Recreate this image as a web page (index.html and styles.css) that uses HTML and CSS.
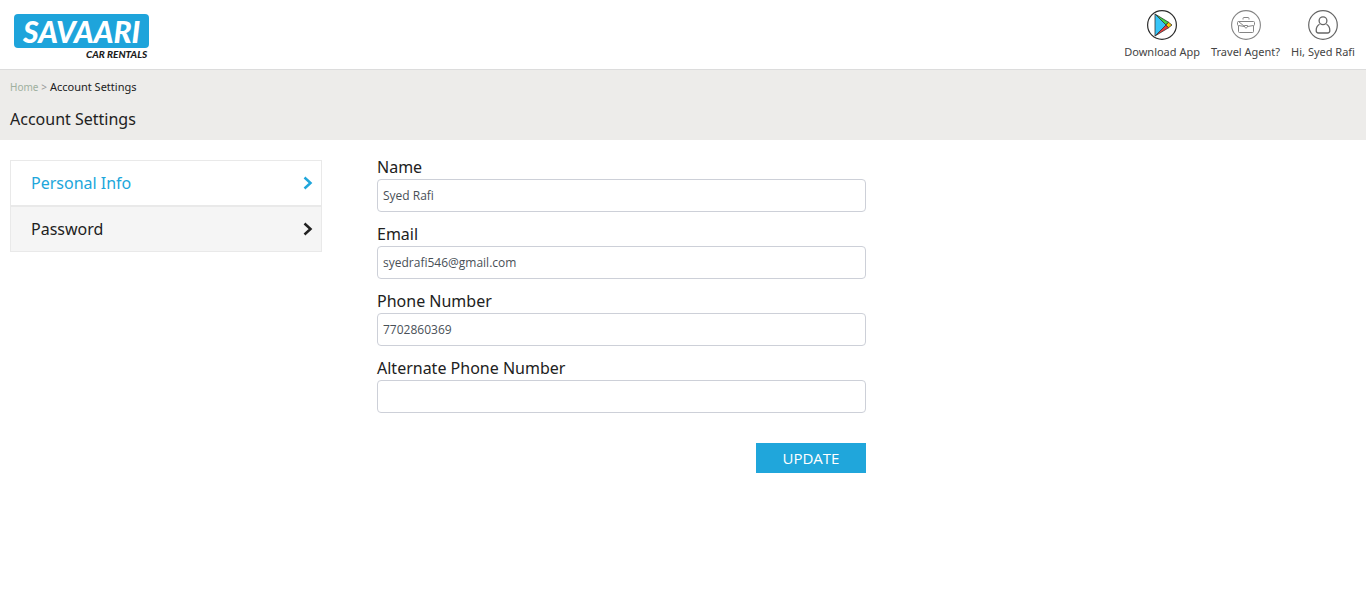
FILE: index.html
```html
<!DOCTYPE html>
<html lang="en">
<head>
<meta charset="utf-8">
<meta name="viewport" content="width=device-width, initial-scale=1">
<title>Account Settings - Savaari Car Rentals</title>
<link rel="stylesheet" href="styles.css">
</head>
<body>
<header class="site-header">
  <a class="logo" href="#">
    <span class="logo-name">SAVAARI</span>
    <span class="logo-tag">CAR RENTALS</span>
  </a>
  <nav class="top-nav" aria-label="Account">
    <a class="top-link" href="#">
      <svg class="top-icon" viewBox="0 0 30 30" aria-hidden="true">
        <circle cx="15" cy="15" r="14.4" fill="#fff" stroke="#2d2d2d" stroke-width="1.2"/>
        <g stroke="#333" stroke-width=".8" stroke-linejoin="round">
          <path d="M8 4 22 12.500 18 15Z" fill="#43d843"/>
          <path d="M8 26 22 17.500 18 15Z" fill="#e93c3c"/>
          <path d="M8 4V26L19 15Z" fill="#36c5f8"/>
          <path d="M19 15 21.500 12.300 25 15 21.500 17.700Z" fill="#ffc800"/>
        </g>
      </svg>
      <span>Download App</span>
    </a>
    <a class="top-link" href="#">
      <svg class="top-icon" viewBox="0 0 30 30" fill="none" stroke="#858585" aria-hidden="true">
        <circle cx="15" cy="15" r="14.400" stroke-width="1.100"/>
        <path d="M12 9.500V8.500Q12 7.500 13 7.500H17Q18 7.500 18 8.500V9.500"/>
        <path d="M7.500 11.500H22.500Q23.500 11.500 23.500 12.500V14.500Q23.500 15.500 22.500 15.500L16.500 16.500M13.500 16.500 7.500 15.500Q6.500 15.500 6.500 14.500V12.500Q6.500 11.500 7.500 11.500Z"/>
        <path d="M7.500 16V21.500Q7.500 22.500 8.500 22.500H21.500Q22.500 22.500 22.500 21.500V16M13.500 15.500H16.500V17L15 18.200 13.500 17Z"/>
      </svg>
      <span>Travel Agent?</span>
    </a>
    <a class="top-link" href="#">
      <svg class="top-icon" viewBox="0 0 30 30" fill="none" stroke="#666" stroke-width="1.300" aria-hidden="true">
        <circle cx="15" cy="15" r="14.300" stroke-width="1.200"/>
        <circle cx="15" cy="10.700" r="3.900"/>
        <path d="M11.500 14.200C9 15.600 8.200 17.800 8.200 20.500Q8.200 23 10.500 23H19.500Q21.800 23 21.800 20.500C21.800 17.800 21 15.600 18.500 14.200"/>
      </svg>
      <span>Hi, Syed Rafi</span>
    </a>
  </nav>
</header>

<section class="page-head">
  <nav class="crumbs" aria-label="Breadcrumb"><a class="crumb-home" href="#">Home</a> <span class="crumb-sep">&gt;</span> <span>Account Settings</span></nav>
  <h1 class="page-title">Account Settings</h1>
</section>

<main class="content">
  <nav class="side-nav" aria-label="Settings">
    <a class="side-link side-link-active" href="#" aria-current="page">
      <span>Personal Info</span>
      <svg class="chevron" viewBox="0 0 10 14" aria-hidden="true"><path d="M1.500 1.500 7.500 7 1.500 12.500"/></svg>
    </a>
    <a class="side-link" href="#">
      <span>Password</span>
      <svg class="chevron" viewBox="0 0 10 14" aria-hidden="true"><path d="M1.500 1.500 7.500 7 1.500 12.500"/></svg>
    </a>
  </nav>
  <form class="info-form">
    <div class="field">
      <label for="name">Name</label>
      <input id="name" type="text" value="Syed Rafi">
    </div>
    <div class="field">
      <label for="email">Email</label>
      <input id="email" type="email" value="syedrafi546@gmail.com">
    </div>
    <div class="field">
      <label for="phone">Phone Number</label>
      <input id="phone" type="tel" value="7702860369">
    </div>
    <div class="field">
      <label for="alt-phone">Alternate Phone Number</label>
      <input id="alt-phone" type="tel">
    </div>
    <button class="update" type="button">UPDATE</button>
  </form>
</main>
</body>
</html>
```
FILE: styles.css
```css
* {
  box-sizing: border-box;
}

body {
  margin: 0;
  background: #fff;
  color: #212121;
  font-family: "Noto Sans", "Open Sans", sans-serif;
  font-size: 16px;
}

a {
  color: inherit;
  text-decoration: none;
}

.site-header {
  display: flex;
  justify-content: space-between;
  align-items: flex-start;
  padding: 10px 10px 8px 14px;
  border-bottom: 1px solid #dcdcdc;
}

.logo {
  display: flex;
  flex-direction: column;
  padding-top: 4px;
  font-family: Lato, sans-serif;
  font-style: italic;
  font-weight: 900;
}

.logo-name {
  padding: 0 9px;
  border-radius: 4px;
  background: #1ea4db;
  color: #fff;
  font-size: 30px;
  line-height: 34px;
}

.logo-tag {
  padding-right: 2px;
  color: #1c1c1c;
  font-size: 10px;
  line-height: 13px;
  text-align: right;
}

.top-nav {
  display: flex;
  gap: 9px;
}

.top-link {
  display: flex;
  flex-direction: column;
  align-items: center;
  gap: 4px;
  padding: 0 1px;
  color: #444;
  font-size: 11px;
  line-height: 16px;
}

.top-icon {
  width: 30px;
  height: 30px;
}

.page-head {
  padding: 8px 10px;
  background: #edecea;
}

.crumbs {
  font-size: 11px;
  line-height: 18px;
}

.crumb-home,
.crumb-sep {
  color: #999;
  font-size: 10px;
}

.crumb-home {
  color: #9fb09f;
}

.page-title {
  margin: 12px 0 0;
  padding-bottom: 2px;
  font-size: 16px;
  font-weight: 400;
  line-height: 22px;
}

.content {
  display: grid;
  grid-template-columns: 312fr 489fr 435fr;
  align-items: start;
  gap: 55px;
  padding: 17px 10px;
}

.side-nav {
  margin-top: 3px;
  border: 1px solid #e9e9e9;
}

.side-link {
  display: flex;
  justify-content: space-between;
  align-items: center;
  padding: 10px 8px 10px 20px;
  background: #f5f5f5;
  line-height: 24px;
}

.side-link-active {
  border-bottom: 2px solid #e9e9e9;
  background: #fff;
  color: #20a6db;
}

.chevron {
  width: 10px;
  height: 14px;
  fill: none;
  stroke: currentColor;
  stroke-width: 2.5;
}

.info-form {
  display: flex;
  flex-direction: column;
  gap: 12px;
}

.field {
  display: flex;
  flex-direction: column;
  gap: 2px;
}

.field label {
  line-height: 20px;
}

.field input {
  width: 100%;
  height: 33px;
  padding: 0 5px;
  border: 1px solid #cdd0d8;
  border-radius: 4px;
  background: #fff;
  color: #495057;
  font: 12px "Open Sans", "Noto Sans", sans-serif;
}

.update {
  align-self: flex-end;
  width: 110px;
  height: 30px;
  margin-top: 18px;
  padding: 0;
  border: 0;
  background: #20a6db;
  color: #fff;
  font: 15px "Open Sans", "Noto Sans", sans-serif;
}
```
